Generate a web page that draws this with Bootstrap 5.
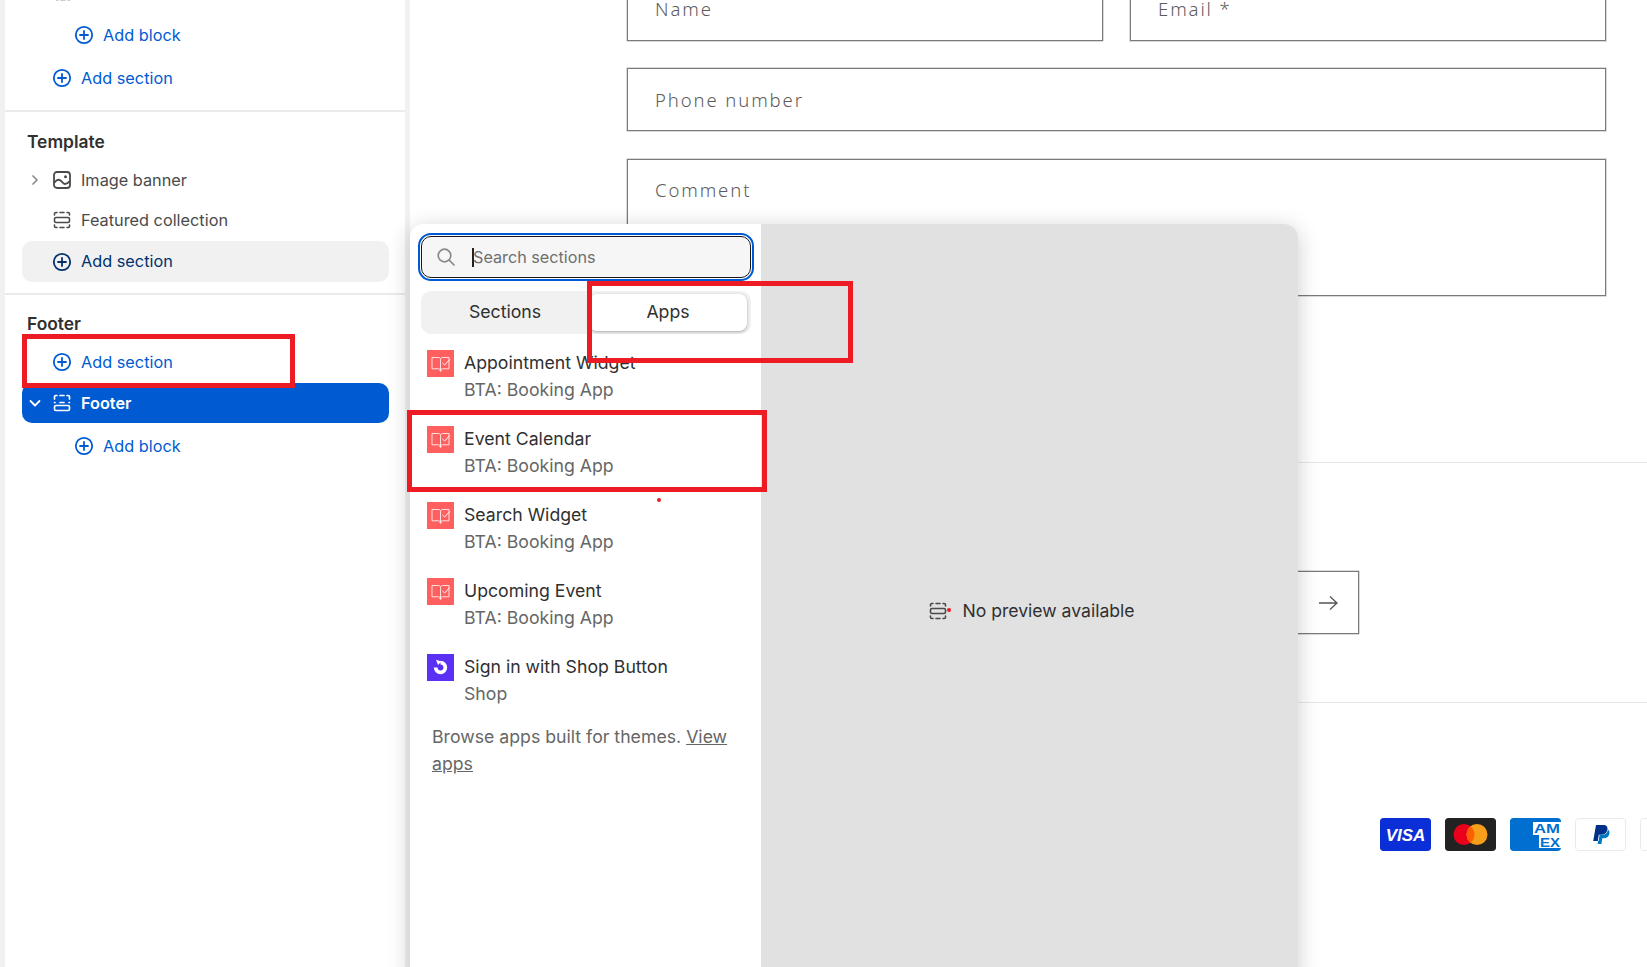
<!DOCTYPE html>
<html lang="en">
<head>
  <meta charset="UTF-8">
  <title>Theme editor - Add section</title>
  <meta name="viewport" content="width=device-width, initial-scale=1">
  <link href="https://cdn.jsdelivr.net/npm/bootstrap@5.3.3/dist/css/bootstrap.min.css" rel="stylesheet">
  <style>
    html, body { height: 967px; overflow: hidden; }
    body { background: #f1f1f1; font-family: Inter, "Liberation Sans", sans-serif; color: #303030; position: relative; }
    .editor-shell { height: 967px; padding-left: 5px; }

    .side-panel { width: 400px; flex: none; background: #fff; height: 967px; overflow: hidden; margin-right: 5px; font-size: 16.3px; }
    .side-top { height: 110px; border-bottom: 2px solid #ebebeb; box-sizing: content-box; }
    .side-clip { height: 15px; padding-left: 48px; overflow: hidden; }
    .side-clip svg { display: block; margin-top: -18px; }
    .side-template { height: 183px; padding-top: 20px; border-bottom: 2px solid #ebebeb; }
    .side-footer { padding-top: 19px; }
    .side-label { font-weight: 600; font-size: 17.4px; padding-left: 22px; line-height: 20px; margin-bottom: 8px; }
    .tree-row { height: 40px; margin: 0 16px 0 17px; border-radius: 10px; padding-left: 30px; gap: 9px; color: #4a4a4a; white-space: nowrap; position: relative; }
    .tree-row.nest { padding-left: 52px; }
    .tree-add { color: #005bd3; }
    .tree-gap { margin-top: 3px; }
    .tree-hover { background: #f1f1f1; color: #00316e; height: 41px; margin-top: 1px; }
    .tree-active { background: #005bd3; color: #fff; font-weight: 600; margin-top: 1px; }
    .tree-chev { position: absolute; left: 5px; }
    .row-ico { width: 20px; height: 20px; flex: none; }

    .preview { flex: 1; background: #fff; height: 967px; overflow: hidden; min-width: 0; }
    .shop-form { margin: -22px 41px 0 217px; }
    .shop-field { border: 1px solid #7a7a7a; box-shadow: 0 0 0 .5px #b5b5b5; height: 63px; padding: 18px 27px 0; font-family: "Noto Sans", sans-serif; font-size: 18.5px; letter-spacing: 1.9px; color: #5c5c5c; font-weight: 300; line-height: 26px; }
    .shop-field.tall { height: 137px; padding-top: 17px; }
    .shop-gap { margin-bottom: 28px; }
    .shop-pair { gap: 27px; margin-bottom: 27px; }
    .shop-pair .shop-field { flex: 1; padding-top: 17px; }
    .shop-rule { border-top: 1px solid #e8e8e8; }
    .shop-rule.first { margin-top: 166px; }
    .mail-row { height: 239px; padding-top: 108px; }
    .mail-box { width: 200px; height: 63px; margin-left: 749px; border: 1px solid #7a7a7a; box-shadow: 0 0 0 .5px #b5b5b5; }
    .mail-arrow { margin-right: 19px; }
    .pay-row { padding: 115px 0 0 970px; gap: 14px; white-space: nowrap; }
    .pay-card { width: 51px; height: 33px; flex: none; border-radius: 3px; }

    .section-picker { position: absolute; left: 410px; top: 224px; width: 888px; height: 760px; border-radius: 14px; overflow: hidden; box-shadow: 0 4px 22px rgba(0,0,0,.2); }
    .picker-list { width: 351px; flex: none; background: #fff; padding: 9px 7px 0 8px; font-size: 17.7px; }
    .picker-view { flex: 1; background: #e1e1e1; font-size: 17.6px; padding: 14px 0 0 4px; gap: 14px; color: #303030; }
    .picker-search { height: 48px; border: 2px solid #005bd3; border-radius: 13px; padding: 1px; }
    .picker-search-in { height: 100%; background: #f6f6f6; border: 1px solid #1a1a1a; border-radius: 10px; padding-left: 14px; color: #6f6f6f; font-size: 16.2px; gap: 16px; }
    .picker-caret { width: 2px; height: 19px; background: #222; margin-right: -17px; }
    .picker-tabs { margin: 10px 3px 0 3px; height: 43px; background: #f1f1f1; border-radius: 10px; padding: 3px 4px 3px 0; }
    .picker-tab { flex: 1; }
    .picker-tab.on { background: #fff; border-radius: 8px; box-shadow: 0 1px 3px rgba(0,0,0,.3); flex: 0 0 158px; }
    .app-list { margin-top: 15px; }
    .app-item { height: 76px; gap: 10px; padding-left: 9px; line-height: 27px; }
    .app-ico { width: 27px; height: 27px; flex: none; margin-top: 1px; }
    .app-sub { color: #666; }
    .picker-note { color: #666; line-height: 27px; padding: 0 20px 0 14px; margin-top: -6px; }
    .picker-note a { color: #666; }

    .mark-box { position: absolute; border: 5px solid #ed1c24; pointer-events: none; }
    .mark-dot { position: absolute; width: 4px; height: 4px; border-radius: 50%; background: #ed1c24; }
  </style>
</head>
<body>
  <svg width="0" height="0" class="position-absolute">
    <defs>
      <symbol id="i-plus" viewBox="0 0 20 20"><circle cx="10" cy="10" r="8.200" fill="none" stroke="currentColor" stroke-width="1.800"/><path d="M10 6v8M6 10h8" fill="none" stroke="currentColor" stroke-width="1.800" stroke-linecap="round"/></symbol>
      <symbol id="i-section" viewBox="0 0 20 20"><g fill="none" stroke="currentColor" stroke-width="1.600" stroke-linecap="round"><path d="M2.500 5V3.800C2.500 3 3 2.500 3.800 2.500H5M8 2.500h4M15 2.500h1.200c.8 0 1.300.5 1.300 1.300V5M2.500 15v1.200c0 .8.500 1.300 1.300 1.300H5M8 17.500h4M15 17.500h1.200c.8 0 1.300-.5 1.300-1.300V15"/><rect x="2.500" y="7.500" width="15" height="5" rx="1.500"/></g></symbol>
      <symbol id="i-foot" viewBox="0 0 20 20"><g fill="none" stroke="currentColor" stroke-width="1.700" stroke-linecap="round"><path d="M2.500 6V3.800C2.500 3 3 2.500 3.800 2.500H5M8 2.500h4M15 2.500h1.200c.8 0 1.300.5 1.300 1.300V6M2.500 9.500h.5M8 9.500h4M17 9.500h.5"/><rect x="2.500" y="12.500" width="15" height="5" rx="1.500"/></g></symbol>
      <symbol id="i-image" viewBox="0 0 20 20"><g fill="none" stroke="currentColor" stroke-width="1.800"><rect x="2" y="2" width="16" height="16" rx="3"/><path d="M2.500 12.500c2-2.500 4-3.500 6-2s3 3.500 4.500 3.500 3-1 4.500-2.500" stroke-linecap="round"/></g><circle cx="13.500" cy="6.800" r="1.500" fill="currentColor"/></symbol>
      <symbol id="i-book" viewBox="0 0 27 27"><rect width="27" height="27" fill="#ff5f5f"/><g fill="none" stroke="#fff" stroke-width=".9" opacity=".9"><path d="M5 7.500h6.500c1 0 2 .6 2 1.600V20c0-.7-1-1.200-2-1.200H5zM13.500 9.100c0-1 1-1.600 2-1.600H22v11.300h-6.500c-1 0-2 .5-2 1.200"/><path d="M12.500 20.500h2l-1 1z"/></g><path d="M15.500 13l2.200 2 5-5.500" fill="none" stroke="#fff" stroke-width="1"/></symbol>
    </defs>
  </svg>

  <div class="editor-shell d-flex">
    <aside class="side-panel">
      <div class="side-top">
        <div class="side-clip"><svg class="row-ico"><use href="#i-section"/></svg></div>
        <div class="tree-row nest tree-add d-flex align-items-center"><svg class="row-ico"><use href="#i-plus"/></svg>Add block</div>
        <div class="tree-row tree-add tree-gap d-flex align-items-center"><svg class="row-ico"><use href="#i-plus"/></svg>Add section</div>
      </div>
      <div class="side-template">
        <div class="side-label">Template</div>
        <div class="tree-row d-flex align-items-center">
          <svg class="tree-chev" width="16" height="16" viewBox="0 0 16 16"><path d="M6 4l4 4-4 4" fill="none" stroke="#8a8a8a" stroke-width="1.700" stroke-linecap="round" stroke-linejoin="round"/></svg>
          <svg class="row-ico"><use href="#i-image"/></svg>Image banner
        </div>
        <div class="tree-row d-flex align-items-center"><svg class="row-ico"><use href="#i-section"/></svg>Featured collection</div>
        <div class="tree-row tree-hover d-flex align-items-center"><svg class="row-ico"><use href="#i-plus"/></svg>Add section</div>
      </div>
      <div class="side-footer">
        <div class="side-label">Footer</div>
        <div class="tree-row tree-add d-flex align-items-center"><svg class="row-ico"><use href="#i-plus"/></svg>Add section</div>
        <div class="tree-row tree-active d-flex align-items-center">
          <svg class="tree-chev" width="16" height="16" viewBox="0 0 16 16"><path d="M3.500 6l4.500 4.500L12.500 6" fill="none" stroke="#fff" stroke-width="1.800" stroke-linecap="round" stroke-linejoin="round"/></svg>
          <svg class="row-ico"><use href="#i-foot"/></svg>Footer
        </div>
        <div class="tree-row nest tree-add tree-gap d-flex align-items-center"><svg class="row-ico"><use href="#i-plus"/></svg>Add block</div>
      </div>
    </aside>

    <main class="preview">
      <div class="shop-form">
        <div class="d-flex shop-pair">
          <div class="shop-field">Name</div>
          <div class="shop-field">Email *</div>
        </div>
        <div class="shop-field shop-gap">Phone number</div>
        <div class="shop-field tall">Comment</div>
      </div>
      <div class="shop-rule first"></div>
      <div class="mail-row">
        <div class="mail-box d-flex align-items-center justify-content-end">
          <svg class="mail-arrow" width="22" height="18" viewBox="0 0 22 18"><path d="M2 9h18M13 2.500L20 9l-7 6.500" fill="none" stroke="#555" stroke-width="1.300"/></svg>
        </div>
      </div>
      <div class="shop-rule"></div>
      <div class="pay-row d-flex">
        <svg class="pay-card" viewBox="0 0 51 33"><rect width="51" height="33" rx="3" fill="#0a2fd6"/><text x="25.500" y="22.500" text-anchor="middle" font-family="Liberation Sans, sans-serif" font-size="17" font-weight="700" font-style="italic" fill="#fff">VISA</text></svg>
        <svg class="pay-card" viewBox="0 0 51 33"><rect width="51" height="33" rx="3" fill="#222"/><circle cx="19" cy="16.500" r="10.500" fill="#eb001b"/><circle cx="32" cy="16.500" r="10.500" fill="#f79e1b"/><path d="M25.500 8.300a10.500 10.500 0 0 1 0 16.400 10.500 10.500 0 0 1 0-16.400z" fill="#ff5f00"/></svg>
        <svg class="pay-card" viewBox="0 0 51 33"><rect width="51" height="33" rx="3" fill="#016fd0"/><rect x="23" y="4" width="28" height="13" fill="#fff"/><rect x="29" y="17" width="22" height="13" fill="#fff"/><text x="24" y="15" textLength="26" lengthAdjust="spacingAndGlyphs" font-family="Liberation Sans, sans-serif" font-size="12.500" font-weight="700" fill="#016fd0">AM</text><text x="30" y="29" textLength="20" lengthAdjust="spacingAndGlyphs" font-family="Liberation Sans, sans-serif" font-size="12.500" font-weight="700" fill="#016fd0">EX</text></svg>
        <svg class="pay-card" viewBox="0 0 51 33"><rect x=".5" y=".5" width="50" height="32" rx="3" fill="#fff" stroke="#eaeaea"/><path d="M21 7h7c3.500 0 5 2 4.400 4.800-.7 3.400-3 5-6.200 5h-2.400l-1 6.200h-4.600z" fill="#003087"/><path d="M32.800 11.500c1.500 1 2 2.500 1.600 4.300-.7 3-2.800 4.500-5.600 4.500h-1.500l-.9 5.700h-3.800l.5-3h.5l1-6.200h2.400c3.200 0 5.500-1.600 5.800-5.300z" fill="#0079c1"/></svg>
        <svg class="pay-card" viewBox="0 0 51 33"><rect x=".5" y=".5" width="50" height="32" rx="3" fill="#fff" stroke="#eaeaea"/></svg>
      </div>
    </main>
  </div>

  <div class="section-picker d-flex">
    <div class="picker-list">
      <div class="picker-search">
        <div class="picker-search-in d-flex align-items-center">
          <svg width="20" height="20" viewBox="0 0 20 20"><circle cx="8.500" cy="8.500" r="6.300" fill="none" stroke="#8a8a8a" stroke-width="1.700"/><path d="M13.200 13.200L18 18" stroke="#8a8a8a" stroke-width="1.700" stroke-linecap="round"/></svg>
          <span class="picker-caret"></span><span>Search sections</span>
        </div>
      </div>
      <div class="picker-tabs d-flex">
        <div class="picker-tab d-flex align-items-center justify-content-center">Sections</div>
        <div class="picker-tab on d-flex align-items-center justify-content-center">Apps</div>
      </div>
      <div class="app-list">
        <div class="app-item d-flex"><svg class="app-ico"><use href="#i-book"/></svg><div>Appointment Widget<div class="app-sub">BTA: Booking App</div></div></div>
        <div class="app-item d-flex"><svg class="app-ico"><use href="#i-book"/></svg><div>Event Calendar<div class="app-sub">BTA: Booking App</div></div></div>
        <div class="app-item d-flex"><svg class="app-ico"><use href="#i-book"/></svg><div>Search Widget<div class="app-sub">BTA: Booking App</div></div></div>
        <div class="app-item d-flex"><svg class="app-ico"><use href="#i-book"/></svg><div>Upcoming Event<div class="app-sub">BTA: Booking App</div></div></div>
        <div class="app-item d-flex">
          <svg class="app-ico" viewBox="0 0 27 27"><rect width="27" height="27" fill="#5a31f4"/><path d="M13.500 8.700a4.800 4.800 0 1 1-4.800 4.800" fill="none" stroke="#fff" stroke-width="3.800"/><path d="M9 5.800l5.500 1.800-3.500 3.400z" fill="#fff"/></svg>
          <div>Sign in with Shop Button<div class="app-sub">Shop</div></div>
        </div>
      </div>
      <div class="picker-note">Browse apps built for themes. <a href="#">View</a> <a href="#">apps</a></div>
    </div>
    <div class="picker-view d-flex align-items-center justify-content-center">
      <svg class="row-ico" style="color:#4a4a4a"><use href="#i-section"/></svg>
      <span>No preview available</span>
    </div>
  </div>

  <div class="mark-box" style="left:22px;top:334px;width:273px;height:54px"></div>
  <div class="mark-box" style="left:587px;top:281px;width:266px;height:82px"></div>
  <div class="mark-box" style="left:407px;top:410px;width:360px;height:82px"></div>
  <div class="mark-dot" style="left:657px;top:498px"></div>
  <div class="mark-dot" style="left:947px;top:608px"></div>

  <script src="https://cdn.jsdelivr.net/npm/bootstrap@5.3.3/dist/js/bootstrap.bundle.min.js"></script>
</body>
</html>
